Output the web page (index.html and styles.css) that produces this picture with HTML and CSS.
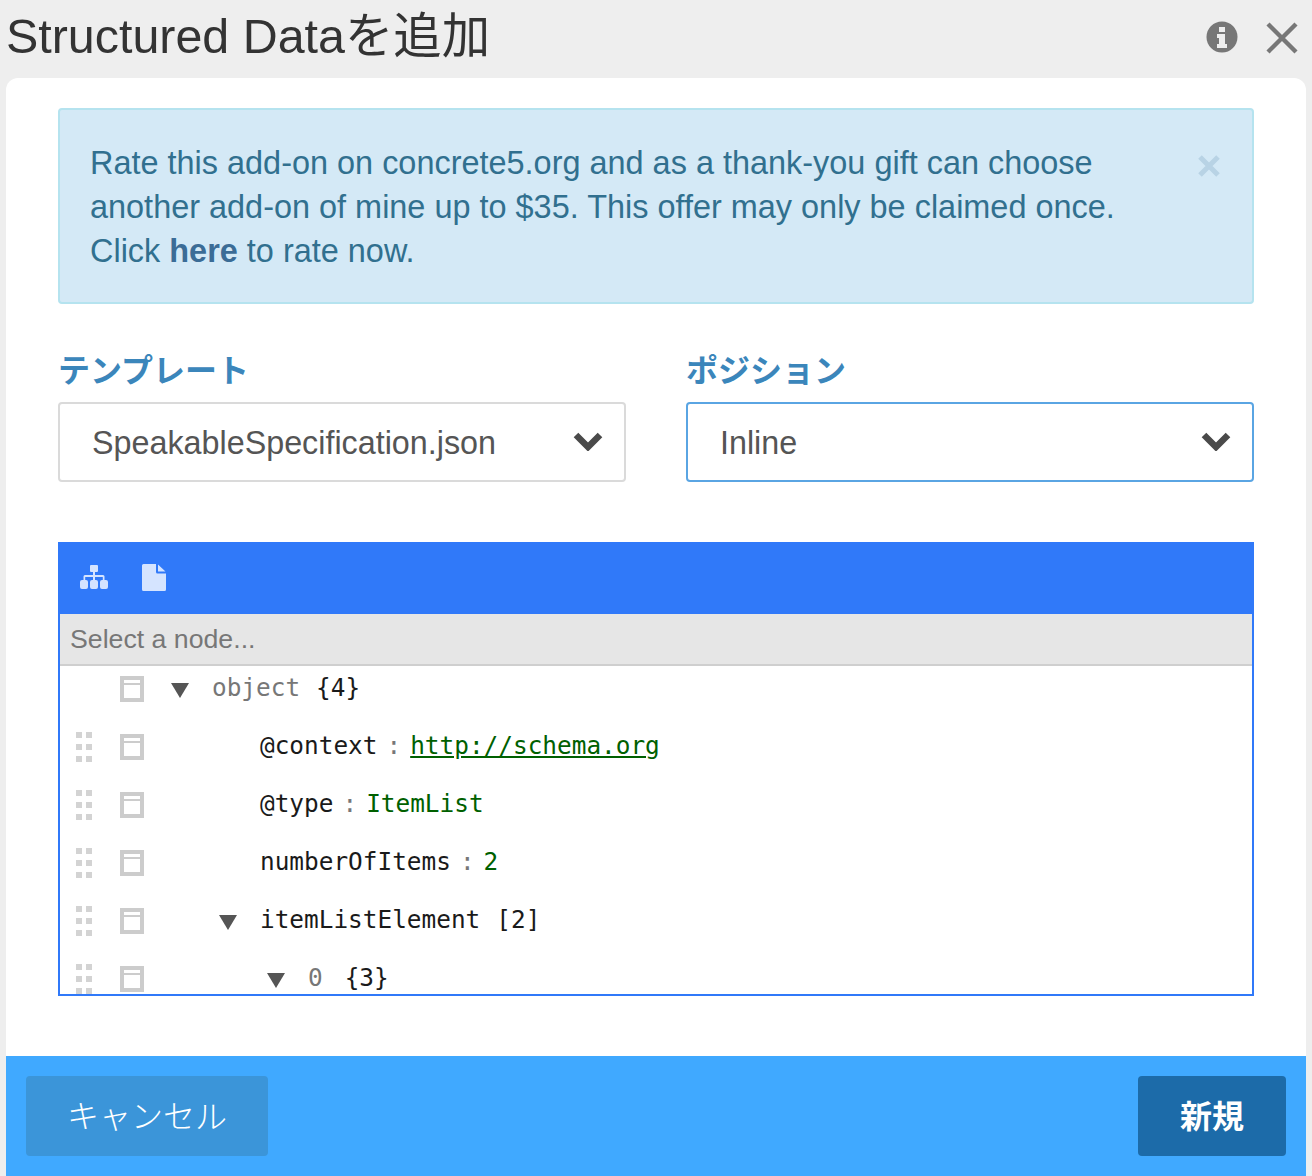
FILE: index.html
```html
<!DOCTYPE html>
<html lang="ja">
<head>
<meta charset="utf-8">
<title>Structured Dataを追加</title>
<link rel="stylesheet" href="styles.css">
</head>
<body>
<svg class="defs" width="0" height="0" aria-hidden="true">
  <symbol id="dots" viewBox="0 0 16 30"><path d="M0 0h6v6H0zM10 0h6v6h-6zM0 12h6v6H0zM10 12h6v6h-6zM0 24h6v6H0zM10 24h6v6h-6z"/></symbol>
  <symbol id="box" viewBox="0 0 24 26"><path fill-rule="evenodd" d="M0 0h24v26H0zM4 4v3h16V4zM4 9v13h16V9z"/></symbol>
  <symbol id="tri" viewBox="0 0 18 15"><path d="M0 0h18L9 15z"/></symbol>
  <symbol id="chev" viewBox="0 0 30 20"><path d="M3 4l12 12L27 4" fill="none" stroke="currentColor" stroke-width="6.5"/></symbol>
</svg>
<div class="titlebar">
  <h1 class="title">Structured Dataを追加</h1>
  <div class="title-icons">
    <svg class="info" viewBox="0 0 32 32"><circle cx="16" cy="16" r="15.5" fill="#777"/><path fill="#eee" d="M13 6h6v5h-6zM11 13h8v10h2v4H11v-4h2v-6h-2z"/></svg>
    <svg class="close" viewBox="0 0 32 32"><path d="M2 2l28 28M30 2L2 30" stroke="#777" stroke-width="4.4" fill="none"/></svg>
  </div>
</div>
<main class="dialog">
  <div class="content">
    <div class="alert">
      <p class="alert-text">Rate this add-on on concrete5.org and as a thank-you gift can choose another add-on of mine up to $35. This offer may only be claimed once. Click <a class="alert-link">here</a> to rate now.</p>
      <svg class="alert-close" viewBox="0 0 22 22"><path d="M2 2l18 18M20 2L2 20" stroke="#b8d3e5" stroke-width="5" fill="none"/></svg>
    </div>
    <div class="fields">
      <div class="field">
        <label class="label">テンプレート</label>
        <div class="select"><span class="select-text">SpeakableSpecification.json</span><svg class="chev"><use href="#chev"/></svg></div>
      </div>
      <div class="field">
        <label class="label">ポジション</label>
        <div class="select select-focus"><span class="select-text">Inline</span><svg class="chev"><use href="#chev"/></svg></div>
      </div>
    </div>
    <div class="editor">
      <div class="menu">
        <svg class="menu-tree" viewBox="0 0 28 24"><path d="M11 0h6a1 1 0 0 1 1 1v5a1 1 0 0 1-1 1h-2v3h8a1.500 1.500 0 0 1 1.500 1.500V15H26a2 2 0 0 1 2 2v5a2 2 0 0 1-2 2h-4a2 2 0 0 1-2-2v-5a2 2 0 0 1 2-2h.800v-3H15v3h1a2 2 0 0 1 2 2v5a2 2 0 0 1-2 2h-4a2 2 0 0 1-2-2v-5a2 2 0 0 1 2-2h1v-3H5.200v3H6a2 2 0 0 1 2 2v5a2 2 0 0 1-2 2H2a2 2 0 0 1-2-2v-5a2 2 0 0 1 2-2h1.500v-3.500A1.500 1.500 0 0 1 5 10h8V7h-2a1 1 0 0 1-1-1V1a1 1 0 0 1 1-1z"/></svg>
        <svg class="menu-file" viewBox="0 0 24 27"><path d="M1.500 0H14v8a1.500 1.500 0 0 0 1.500 1.500H24V25.500A1.500 1.500 0 0 1 22.500 27h-21A1.500 1.500 0 0 1 0 25.500v-24A1.500 1.500 0 0 1 1.500 0zM16 0.500L23.500 7.500H16z"/></svg>
      </div>
      <div class="nav">Select a node...</div>
      <div class="tree">
        <div class="row">
          <span class="drag"></span>
          <svg class="box"><use href="#box"/></svg>
          <span class="tw"><svg class="tri"><use href="#tri"/></svg></span>
          <span class="tx grey">object</span><span class="tx count">{4}</span>
        </div>
        <div class="row">
          <svg class="drag"><use href="#dots"/></svg>
          <svg class="box"><use href="#box"/></svg>
          <span class="tw lv1"></span>
          <span class="tx">@context</span><span class="tx sep">:</span><a class="tx val link">http://schema.org</a>
        </div>
        <div class="row">
          <svg class="drag"><use href="#dots"/></svg>
          <svg class="box"><use href="#box"/></svg>
          <span class="tw lv1"></span>
          <span class="tx">@type</span><span class="tx sep">:</span><span class="tx val">ItemList</span>
        </div>
        <div class="row">
          <svg class="drag"><use href="#dots"/></svg>
          <svg class="box"><use href="#box"/></svg>
          <span class="tw lv1"></span>
          <span class="tx">numberOfItems</span><span class="tx sep">:</span><span class="tx val">2</span>
        </div>
        <div class="row">
          <svg class="drag"><use href="#dots"/></svg>
          <svg class="box"><use href="#box"/></svg>
          <span class="tw lv1"><svg class="tri"><use href="#tri"/></svg></span>
          <span class="tx">itemListElement</span><span class="tx count">[2]</span>
        </div>
        <div class="row">
          <svg class="drag"><use href="#dots"/></svg>
          <svg class="box"><use href="#box"/></svg>
          <span class="tw lv2"><svg class="tri"><use href="#tri"/></svg></span>
          <span class="tx grey">0</span><span class="tx count count-wide">{3}</span>
        </div>
      </div>
    </div>
  </div>
  <footer class="footer">
    <button class="btn btn-cancel">キャンセル</button>
    <button class="btn btn-primary">新規</button>
  </footer>
</main>
</body>
</html>
```
FILE: styles.css
```css
* { box-sizing: border-box; }
html, body { margin: 0; height: 1176px; overflow: hidden; }
body {
  background: #eeeeee;
  color: #333;
  font-family: "Liberation Sans", "Noto Sans CJK JP", sans-serif;
  display: flex;
  flex-direction: column;
}
.defs { position: absolute; }
.titlebar {
  height: 78px;
  flex: none;
  display: flex;
  align-items: center;
  justify-content: space-between;
  padding: 0 14px 6px 6px;
}
.title { margin: 0; font-size: 48.4px; font-weight: 400; line-height: 60px; color: #333; }
.title-icons { display: flex; align-items: center; gap: 28px; padding-top: 2px; }
.info { width: 32px; height: 32px; display: block; }
.close { width: 32px; height: 32px; display: block; margin-top: 2px; }
.dialog {
  flex: 1;
  margin: 0 6px;
  background: #fff;
  border-radius: 12px 12px 0 0;
  display: flex;
  flex-direction: column;
  overflow: hidden;
}
.content { flex: 1; padding: 30px 52px 0; }
.alert {
  height: 196px;
  background: #d4e9f6;
  border: 2px solid #b5e3ef;
  border-radius: 4px;
  padding: 31px 30px;
  position: relative;
}
.alert-text { margin: 0; font-size: 32.45px; line-height: 44px; color: #31708f; width: 1060px; }
.alert-link { font-weight: 700; color: #3b6c96; }
.alert-close { position: absolute; right: 32px; top: 45px; width: 22px; height: 22px; }
.fields { display: grid; grid-template-columns: 1fr 1fr; gap: 60px; margin-top: 44px; }
.label { display: block; font-size: 32px; line-height: 46px; font-weight: 700; color: #3b86bb; margin-bottom: 10px; height: 44px; }
.select {
  height: 80px;
  border: 2px solid #dadada;
  border-radius: 4px;
  padding: 0 21px 0 32px;
  font-size: 32.3px;
  color: #555;
  display: flex;
  align-items: center;
  justify-content: space-between;
}
.select-text { padding-top: 2px; }
.select-focus { border-color: #5aa5e3; }
.chev { width: 30px; height: 20px; color: #4a4a4a; margin-top: -2px; }
.editor {
  margin-top: 60px;
  height: 454px;
  border: 2px solid #3079f9;
  overflow: hidden;
}
.menu {
  height: 70px;
  background: #3079f9;
  margin: -2px -2px 0;
  box-sizing: content-box;
  padding: 0 0 2px 22px;
  display: flex;
  align-items: center;
  gap: 34px;
}
.menu-tree { width: 28px; height: 24px; fill: #d5e4ff; }
.menu-file { width: 24px; height: 27px; fill: #d5e4ff; }
.nav {
  height: 52px;
  background: #e6e6e6;
  border-bottom: 2px solid #cfcfcf;
  padding-left: 10px;
  font-size: 26.7px;
  line-height: 50px;
  color: #777;
}
.tree { height: 328px; overflow: hidden; font-family: "DejaVu Sans Mono", monospace; font-size: 24.4px; color: #1a1a1a; }
.row { height: 58px; display: flex; align-items: center; padding-left: 16px; white-space: pre; position: relative; top: -6px; }
.tx { position: relative; top: -2px; }
.drag { width: 16px; height: 30px; fill: #d3d3d3; flex: none; margin-right: 28px; }
.box { width: 24px; height: 26px; fill: #cccccc; flex: none; margin-right: 24px; }
.tw { width: 44px; flex: none; display: flex; padding-left: 3px; }
.lv1 { width: 92px; padding-left: 51px; }
.lv2 { width: 140px; padding-left: 99px; }
.tri { width: 18px; height: 15px; fill: #555; flex: none; margin-top: 2px; }
.grey { color: #777; }
.count { margin-left: 16px; }
.count-wide { margin-left: 22px; }
.sep { color: #777; margin: 0 9px; }
.val { color: #006000; }
.link { text-decoration: underline; }
.footer {
  height: 120px;
  flex: none;
  background: #40a9ff;
  padding: 20px;
  display: flex;
  justify-content: space-between;
}
.btn {
  height: 80px;
  border: 0;
  border-radius: 4px;
  padding: 0 0 4px;
  font-family: "Liberation Sans", "Noto Sans CJK JP", sans-serif;
  font-size: 32px;
  color: #fff;
}
.btn-cancel { width: 242px; background: #3b95d9; font-weight: 300; }
.btn-primary { width: 148px; background: #1c6ba9; font-weight: 700; }
```
